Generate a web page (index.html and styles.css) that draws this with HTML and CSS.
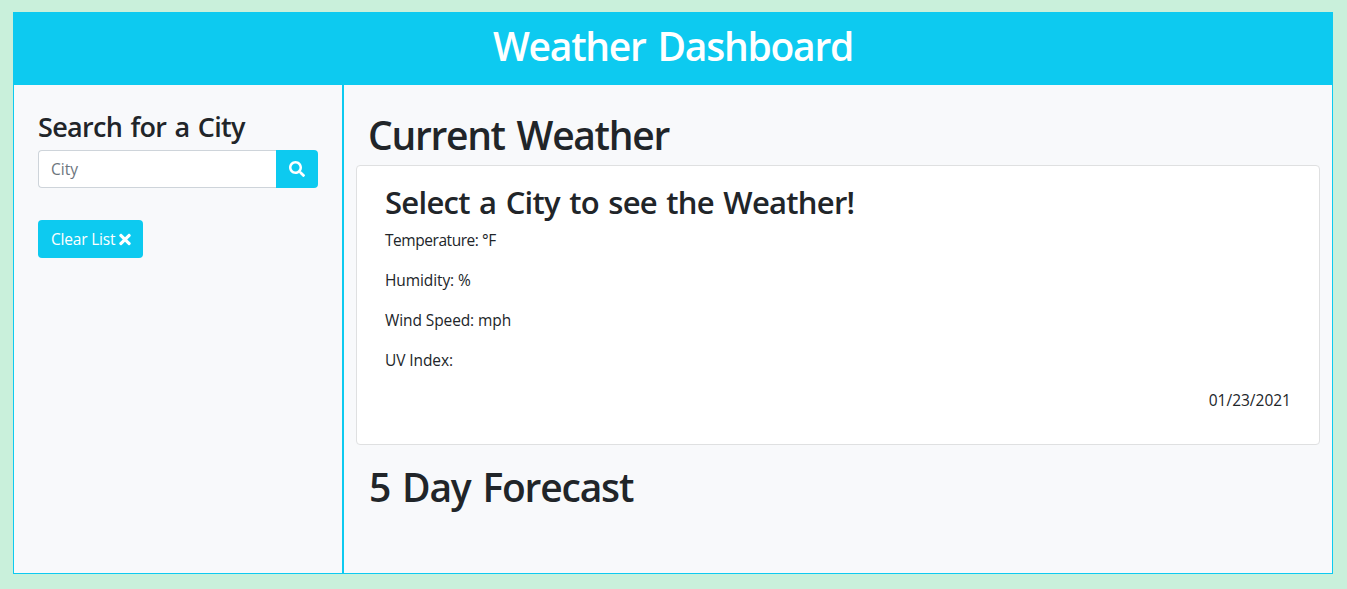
FILE: index.html
```html
<!DOCTYPE html>
<html lang="en">
<head>
<meta charset="utf-8">
<title>Weather Dashboard</title>
<link rel="stylesheet" href="styles.css">
</head>
<body>
<div class="container">
  <header class="header"><h1 class="title">Weather Dashboard</h1></header>
  <div class="columns">
    <aside class="sidebar">
      <h3 class="search-title">Search for a City</h3>
      <form class="search">
        <input class="search-input" type="text" placeholder="City" aria-label="City">
        <button class="search-button" type="button" aria-label="Search">
          <svg class="icon-search" viewBox="0 0 512 512"><path fill="currentColor" d="M505 442.700L405.300 343c-4.500-4.500-10.600-7-17-7H372c27.600-35.300 44-79.700 44-128C416 93.100 322.900 0 208 0S0 93.100 0 208s93.100 208 208 208c48.300 0 92.700-16.400 128-44v16.300c0 6.400 2.500 12.500 7 17l99.700 99.700c9.400 9.400 24.600 9.400 33.900 0l28.300-28.300c9.400-9.400 9.400-24.600.1-34zM208 336c-70.700 0-128-57.200-128-128 0-70.700 57.200-128 128-128 70.700 0 128 57.200 128 128 0 70.700-57.200 128-128 128z"/></svg>
        </button>
      </form>
      <button class="clear-button" type="button"><span class="clear-label">Clear List</span>
        <svg class="icon-times" viewBox="0 0 352 512"><path fill="currentColor" d="M242.720 256l100.070-100.070c12.280-12.280 12.280-32.190 0-44.480l-22.240-22.240c-12.280-12.280-32.190-12.280-44.480 0L176 189.280 75.930 89.210c-12.280-12.280-32.190-12.280-44.480 0L9.210 111.450c-12.280 12.280-12.280 32.190 0 44.480L109.280 256 9.210 356.070c-12.280 12.280-12.280 32.190 0 44.480l22.240 22.240c12.280 12.280 32.200 12.280 44.480 0L176 322.720l100.070 100.070c12.280 12.280 32.200 12.280 44.480 0l22.240-22.240c12.280-12.280 12.280-32.190 0-44.480L242.720 256z"/></svg>
      </button>
    </aside>
    <main class="main">
      <h1 class="section-title">Current Weather</h1>
      <section class="card">
        <h2 class="card-title">Select a City to see the Weather!</h2>
        <p class="reading temperature">Temperature: °F</p>
        <p class="reading">Humidity: %</p>
        <p class="reading">Wind Speed: mph</p>
        <p class="reading">UV Index:</p>
        <p class="reading date">01/23/2021</p>
      </section>
      <h1 class="section-title forecast-title">5 Day Forecast</h1>
    </main>
  </div>
</div>
</body>
</html>
```
FILE: styles.css
```css
* { box-sizing: border-box; }

body {
  margin: 0;
  padding: 12px 14px 15px 13px;
  height: 589px;
  background: #c9f0db;
  color: #212529;
  font-family: "Open Sans", "Noto Sans", sans-serif;
  font-size: 15.5px;
  line-height: 1.5;
}

h1, h2, h3, p { margin: 0; }
h1, h2, h3 { font-weight: 550; line-height: 1.2; }

.container {
  display: flex;
  flex-direction: column;
  height: 562px;
  background: #f8f9fb;
  border: 1px solid #0dcaf0;
}

.header {
  height: 72px;
  padding-top: 9px;
  background: #0dcaf0;
  color: #fff;
  text-align: center;
}

.title { font-size: 39px; line-height: 48px; letter-spacing: -1.25px; word-spacing: 3px; }

.columns { display: flex; flex: 1; }

.sidebar {
  width: 330px;
  padding: 25px 24px 0;
  border-right: 2px solid #0dcaf0;
}

.search-title { font-size: 27px; line-height: 34px; margin-bottom: 6px; white-space: nowrap; letter-spacing: -0.7px; word-spacing: 2px; }

.search { display: flex; height: 38px; margin-bottom: 32px; }

.search-input {
  flex: 1;
  min-width: 0;
  padding: 2px 12px 0;
  border: 1px solid #ced4da;
  border-right: 0;
  border-radius: 4px 0 0 4px;
  background: #fff;
  font: inherit;
}

.search-input::placeholder { color: #6c757d; opacity: 1; }

.search-button, .clear-button {
  display: flex;
  align-items: center;
  border: 0;
  background: #0dcaf0;
  color: #fff;
  font: inherit;
}

.search-button { width: 42px; padding: 0 13px; border-radius: 0 4px 4px 0; }
.icon-search { width: 16px; height: 16px; }

.clear-button { width: 105px; height: 38px; gap: 4px; padding: 0 0 0 13px; border-radius: 4px; white-space: nowrap; letter-spacing: -0.2px; }
.clear-label { padding-top: 2px; }
.icon-times { flex: none; width: 12px; height: 17px; }

.main { flex: 1; padding: 26px 12px 0; }

.section-title { padding-left: 12px; font-size: 39px; line-height: 48px; letter-spacing: -1.3px; word-spacing: 3px; }

.card {
  height: 280px;
  margin-top: 6px;
  padding: 17px 28px 0;
  border: 1px solid #dfe0e1;
  border-radius: 4px;
  background: #fff;
}

.card-title { font-size: 31px; line-height: 38px; margin-bottom: 7px; letter-spacing: -0.72px; word-spacing: 2px; }

.reading { margin-bottom: 16px; line-height: 24px; letter-spacing: -0.1px; }
.temperature { letter-spacing: -0.45px; }
.date { text-align: right; letter-spacing: 0; }

.forecast-title { margin-top: 18px; padding-left: 13px; letter-spacing: -1.2px; }
```
